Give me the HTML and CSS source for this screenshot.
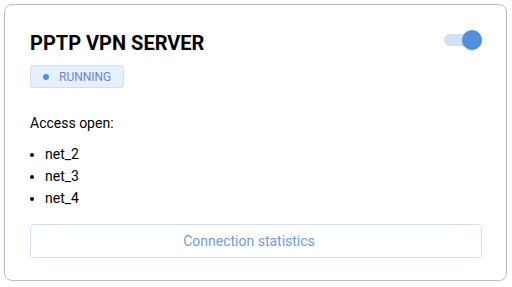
FILE: index.html
```html
<!DOCTYPE html>
<html lang="en">

<head>
    <meta charset="UTF-8">
    <meta name="viewport" content="width=device-width, initial-scale=1">
    <title>PPTP VPN Server</title>
    <link rel="stylesheet" href="styles.css">
</head>

<body>
    <div class="card">
        <div class="card-header">
            <h2 class="card-title">PPTP VPN SERVER</h2>
            <div class="toggle is-on">
                <span class="toggle-knob"></span>
            </div>
        </div>
        <div class="status-badge">
            <span class="status-dot"></span>
            <span>RUNNING</span>
        </div>
        <p class="access-label">Access open:</p>
        <ul class="access-list">
            <li>net_2</li>
            <li>net_3</li>
            <li>net_4</li>
        </ul>
        <button class="stats-button">Connection statistics</button>
    </div>
</body>

</html>
```

FILE: styles.css
```css
:root {
    --text-color: #000;
    --primary-color: #5190dc;
    --primary-light: #e6effc;
    --primary-border: #d0e0f5;
    --track-color: #d3e2f3;
    --card-border: #bcbcbc;
}

body {
    font-family: Roboto, "Open Sans", sans-serif;
    margin: 0;
    padding: 4px;
    background-color: #fff;
    color: var(--text-color);
}

.card {
    width: 503px;
    height: 277px;
    box-sizing: border-box;
    border: 1px solid var(--card-border);
    border-radius: 8px;
    padding: 26px 24px 0 25px;
}

.card-header {
    display: flex;
    justify-content: space-between;
    align-items: flex-start;
}

.card-title {
    font-size: 20px;
    line-height: 24px;
    font-weight: bold;
    margin: 0;
}

.toggle {
    position: relative;
    width: 36px;
    height: 12px;
    border-radius: 6px;
    background-color: var(--track-color);
    margin-top: 3px;
    margin-right: 2px;
}

.toggle-knob {
    position: absolute;
    top: -4px;
    right: -2px;
    width: 20px;
    height: 20px;
    border-radius: 50%;
    background-color: var(--primary-color);
    box-shadow: 0 1px 2px rgba(0, 0, 0, 0.15);
}

.status-badge {
    display: inline-flex;
    align-items: center;
    gap: 10px;
    height: 23px;
    box-sizing: border-box;
    margin-top: 10px;
    padding: 0 12px 0 12px;
    background-color: var(--primary-light);
    border: 1px solid var(--primary-border);
    border-radius: 3px;
    font-size: 12px;
    color: #6a88d2;
}

.status-dot {
    width: 6px;
    height: 6px;
    border-radius: 50%;
    background-color: var(--primary-color);
}

.access-label {
    font-size: 14px;
    line-height: 20px;
    margin: 25px 0 0 0;
}

.access-list {
    font-size: 14px;
    line-height: 22px;
    margin: 10px 0 0 0;
    padding-left: 15px;
}

.stats-button {
    display: block;
    width: 100%;
    height: 34px;
    margin-top: 15px;
    padding: 0 14px 0 0;
    background: #fff;
    border: 1px solid var(--primary-border);
    border-radius: 4px;
    font-family: inherit;
    font-size: 14px;
    color: #7099e2;
    cursor: pointer;
}
```
